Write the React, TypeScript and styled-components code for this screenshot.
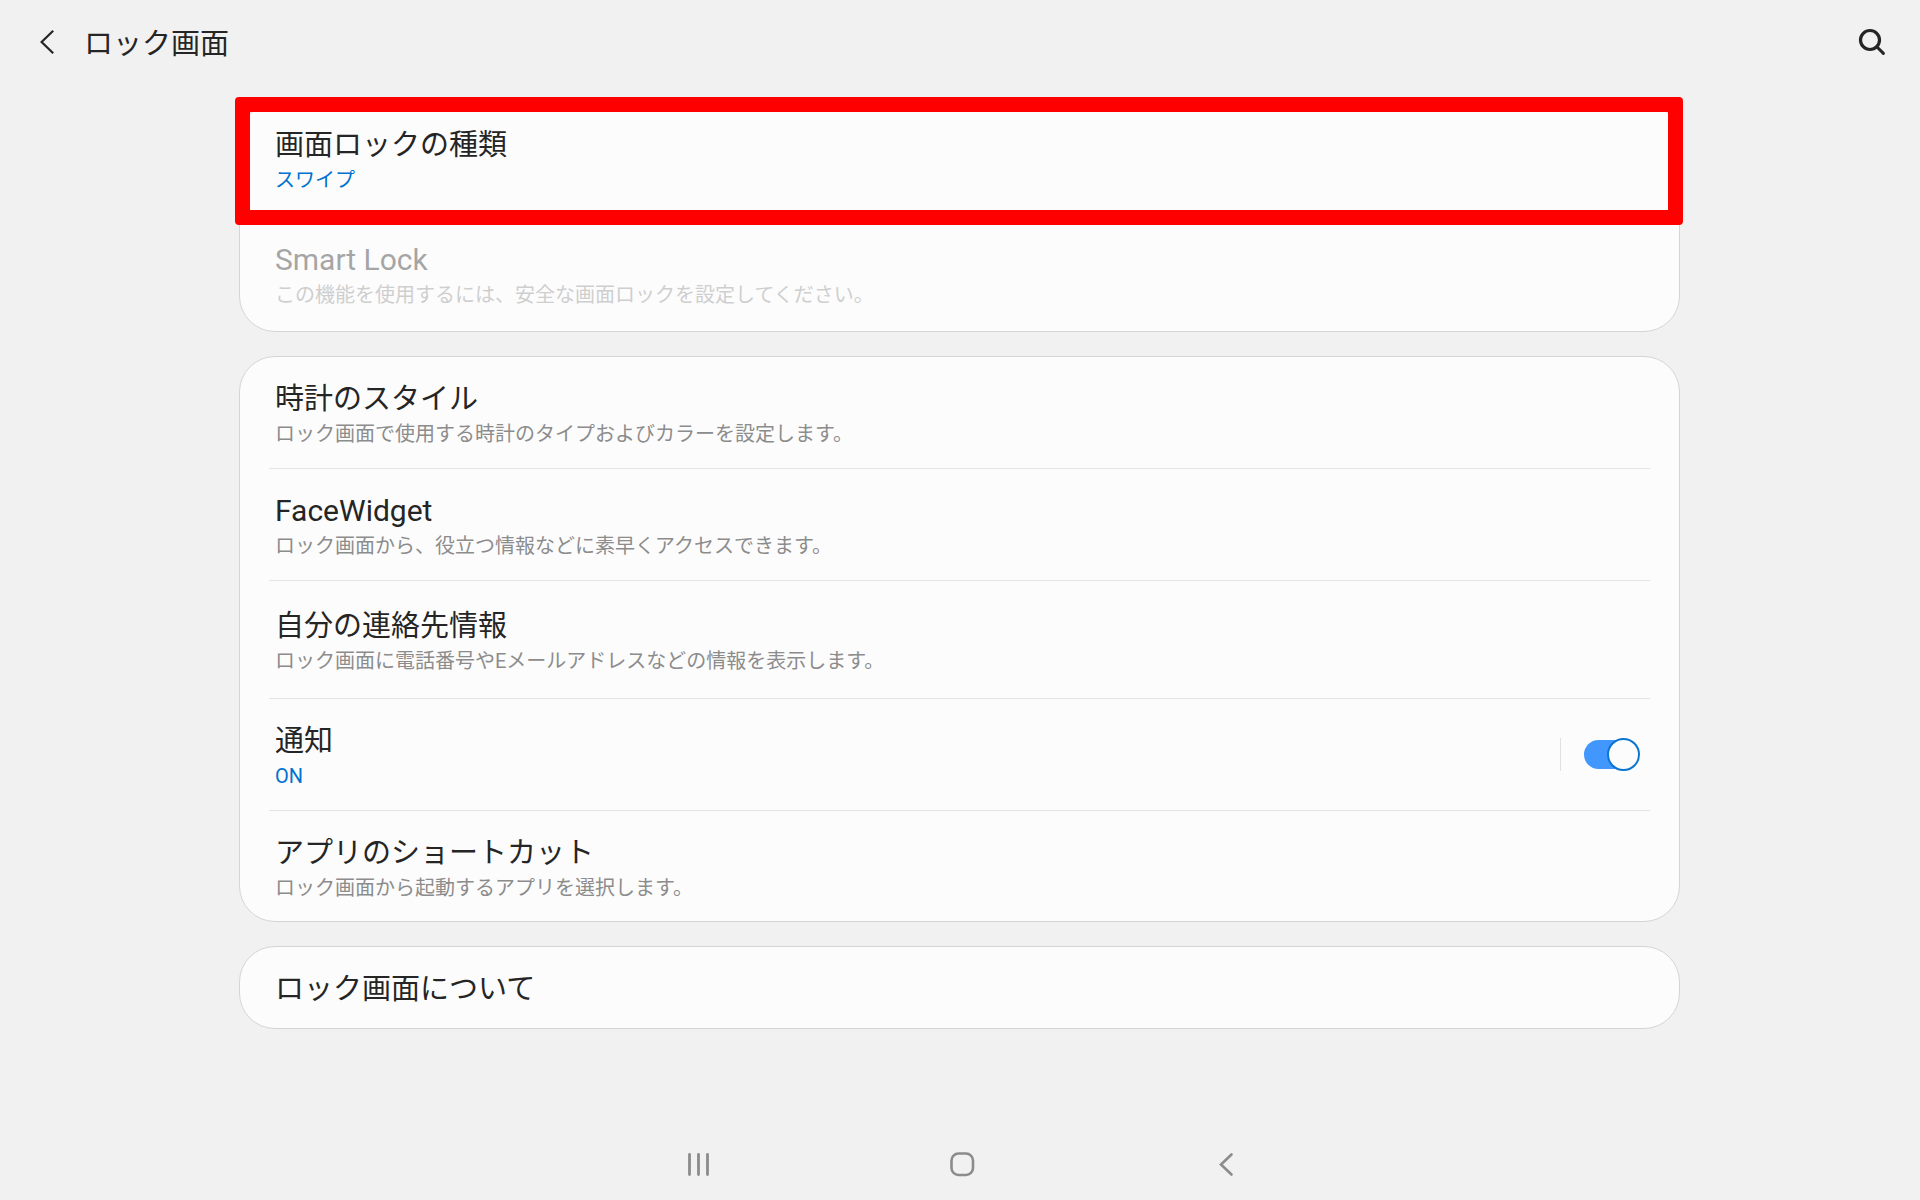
import React from "react";
import styled, { createGlobalStyle } from "styled-components";

const GlobalStyle = createGlobalStyle`
  *, *::before, *::after { box-sizing: border-box; }
  body {
    margin: 0;
    background: #f1f1f1;
    color: #252525;
    font-family: Roboto, "Noto Sans CJK JP", sans-serif;
  }
  button {
    margin: 0;
    padding: 0;
    border: 0;
    background: none;
    color: inherit;
    font: inherit;
    text-align: left;
    cursor: pointer;
  }
`;

const Screen = styled.div`
  display: flex;
  flex-direction: column;
  min-height: 100vh;
`;

const Header = styled.header`
  display: flex;
  align-items: center;
  height: 84px;
  padding: 0 32px 0 31px;
`;

const IconButton = styled.button`
  display: grid;
  place-items: center;
  width: 32px;
  height: 32px;
`;

const PageTitle = styled.h1`
  flex: 1;
  margin: 0;
  padding: 3px 0 0 21px;
  font-size: 29px;
  line-height: 36px;
  font-weight: 400;
`;

const Main = styled.main`
  display: flex;
  flex-direction: column;
  gap: 24px;
  width: 75%;
  margin: 0 auto;
  padding: 19px 0 24px;
`;

const Card = styled.ul`
  margin: 0 0 0 -1px;
  padding: 0 29px;
  list-style: none;
  border: 1px solid #d5d5d5;
  border-radius: 36px;
  background: #fcfcfc;
`;

const Item = styled.li`
  position: relative;
  display: flex;
  align-items: center;

  & + & {
    border-top: 1px solid #e4e4e4;
  }
`;

const Highlight = styled.span`
  position: absolute;
  inset: -7px -33px -10px -34px;
  border: 15px solid #ff0000;
  border-radius: 4px;
  z-index: 1;
  pointer-events: none;
`;

type RowSize = "lead" | "regular" | "medium" | "tall" | "last" | "single";

const rowPadding: Record<RowSize, string> = {
  lead: "23px 6px 18px",
  regular: "24px 6px 17px",
  medium: "26px 6px 19px",
  tall: "27px 6px 20px",
  last: "24px 6px 16px",
  single: "24px 6px 21px",
};

const RowButton = styled.button<{ $size: RowSize }>`
  flex: 1;
  display: flex;
  flex-direction: column;
  padding: ${(p) => rowPadding[p.$size]};

  &:disabled {
    opacity: 0.4;
    cursor: default;
  }
`;

const RowTitle = styled.span<{ $latin?: boolean }>`
  font-size: ${(p) => (p.$latin ? 30 : 29)}px;
  line-height: 36px;
`;

const RowNote = styled.span<{ $active?: boolean }>`
  font-size: 20px;
  line-height: 34px;
  color: ${(p) => (p.$active ? "#0072d0" : "#8c8c8c")};
`;

const SwitchArea = styled.div`
  display: flex;
  align-items: center;
  height: 33px;
  padding: 0 10px 0 23px;
  border-left: 1px solid #e0e0e0;
`;

const Switch = styled.input`
  appearance: none;
  display: grid;
  align-items: center;
  width: 56px;
  height: 33px;
  margin: 0;
  cursor: pointer;

  &::before,
  &::after {
    content: "";
    grid-area: 1 / 1;
  }
  &::before {
    width: 52px;
    height: 29px;
    border-radius: 15px;
    background: #bdbdbd;
  }
  &::after {
    width: 33px;
    height: 33px;
    border: 2px solid #8c8c8c;
    border-radius: 50%;
    background: #fcfcfc;
  }
  &:checked::before {
    background: #4297ff;
  }
  &:checked::after {
    justify-self: end;
    border-color: #0a74d0;
  }
`;

const NavBar = styled.nav`
  display: flex;
  justify-content: center;
  align-items: center;
  gap: 232px;
  height: 72px;
  margin-top: auto;
  padding-left: 4px;
`;

type Entry = {
  title: string;
  note?: string;
  active?: boolean;
  disabled?: boolean;
  latin?: boolean;
  size?: RowSize;
  highlighted?: boolean;
  toggle?: boolean;
};

const groups: Entry[][] = [
  [
    {
      title: "画面ロックの種類",
      note: "スワイプ",
      active: true,
      highlighted: true,
      size: "lead",
    },
    {
      title: "Smart Lock",
      note: "この機能を使用するには、安全な画面ロックを設定してください。",
      disabled: true,
      latin: true,
      size: "medium",
    },
  ],
  [
    { title: "時計のスタイル", note: "ロック画面で使用する時計のタイプおよびカラーを設定します。" },
    {
      title: "FaceWidget",
      note: "ロック画面から、役立つ情報などに素早くアクセスできます。",
      latin: true,
    },
    {
      title: "自分の連絡先情報",
      note: "ロック画面に電話番号やEメールアドレスなどの情報を表示します。",
      size: "tall",
    },
    { title: "通知", note: "ON", active: true, toggle: true },
    {
      title: "アプリのショートカット",
      note: "ロック画面から起動するアプリを選択します。",
      size: "last",
    },
  ],
  [{ title: "ロック画面について", size: "single" }],
];

function SettingItem({ entry }: { entry: Entry }) {
  const [on, setOn] = React.useState(true);
  return (
    <Item>
      <RowButton type="button" disabled={entry.disabled} $size={entry.size ?? "regular"}>
        <RowTitle $latin={entry.latin}>{entry.title}</RowTitle>
        {entry.note && <RowNote $active={entry.active}>{entry.note}</RowNote>}
      </RowButton>
      {entry.toggle && (
        <SwitchArea>
          <Switch
            type="checkbox"
            role="switch"
            aria-label={entry.title}
            checked={on}
            onChange={(e) => setOn(e.target.checked)}
          />
        </SwitchArea>
      )}
      {entry.highlighted && <Highlight aria-hidden="true" />}
    </Item>
  );
}

export default function App() {
  return (
    <Screen>
      <GlobalStyle />
      <Header>
        <IconButton type="button" aria-label="戻る">
          <svg width="32" height="32" viewBox="0 0 32 32" fill="none" stroke="#252525" strokeWidth="2.2">
            <path d="M22.2 4.8 10.6 16l11.6 11.2" />
          </svg>
        </IconButton>
        <PageTitle>ロック画面</PageTitle>
        <IconButton type="button" aria-label="検索">
          <svg width="32" height="32" viewBox="0 0 32 32" fill="none" stroke="#252525" strokeWidth="3.2">
            <circle cx="14" cy="14" r="9.5" />
            <path d="m20.8 20.8 6.6 6.6" strokeLinecap="round" strokeWidth="3" />
          </svg>
        </IconButton>
      </Header>
      <Main>
        {groups.map((group, i) => (
          <Card key={i}>
            {group.map((entry) => (
              <SettingItem key={entry.title} entry={entry} />
            ))}
          </Card>
        ))}
      </Main>
      <NavBar>
        <IconButton type="button" aria-label="履歴">
          <svg width="32" height="32" viewBox="0 0 32 32" fill="none" stroke="#8c8c8c" strokeWidth="2.8" strokeLinecap="round">
            <path d="M7.5 6.5v20M16.5 6.5v20M25.5 6.5v20" />
          </svg>
        </IconButton>
        <IconButton type="button" aria-label="ホーム">
          <svg width="32" height="32" viewBox="0 0 32 32" fill="none" stroke="#8c8c8c" strokeWidth="2.6">
            <rect x="5.5" y="5.5" width="21.5" height="21.5" rx="7" />
          </svg>
        </IconButton>
        <IconButton type="button" aria-label="戻る">
          <svg width="32" height="32" viewBox="0 0 32 32" fill="none" stroke="#8c8c8c" strokeWidth="2.6" strokeLinecap="round">
            <path d="M21.5 6.5 11 16.5l10.5 10" />
          </svg>
        </IconButton>
      </NavBar>
    </Screen>
  );
}
